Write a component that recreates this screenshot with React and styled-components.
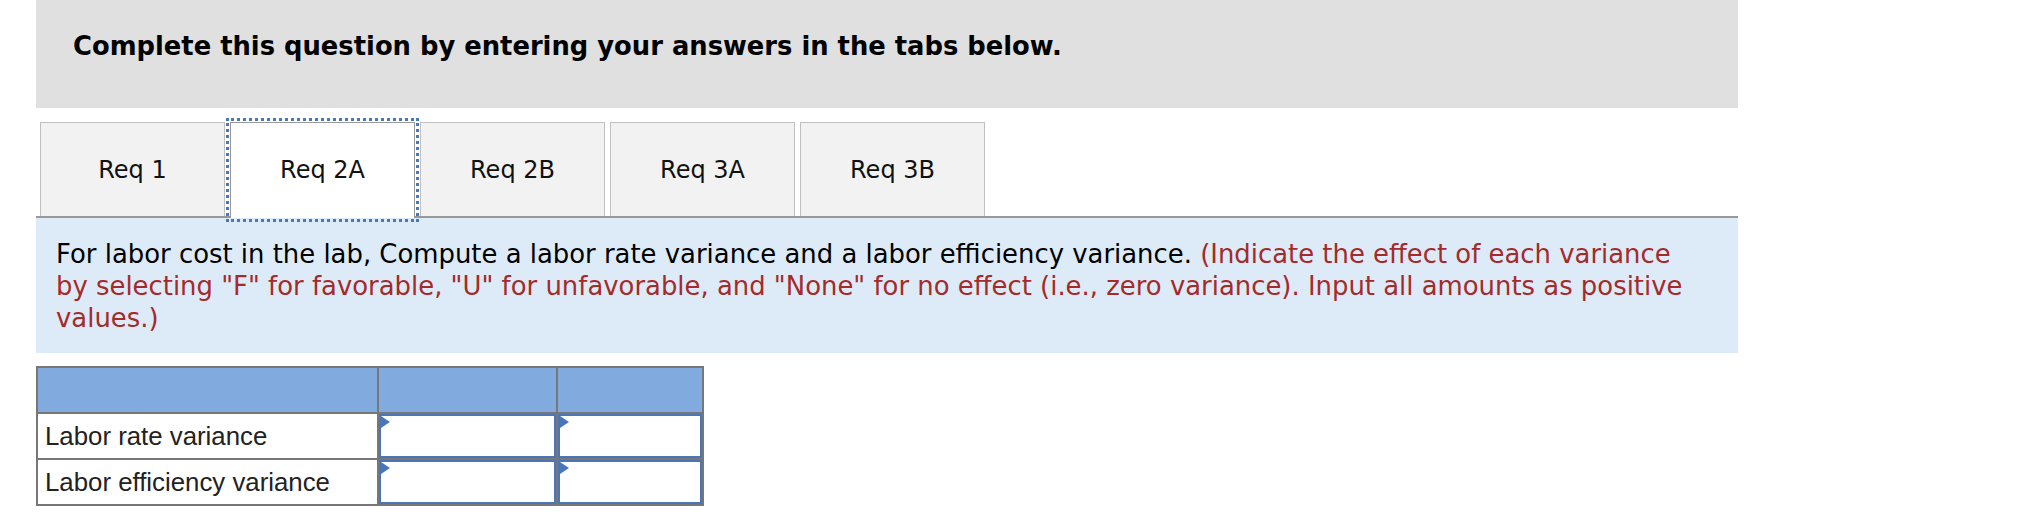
import React from "react"
import styled, { createGlobalStyle } from "styled-components"

const GlobalStyle = createGlobalStyle`
  html, body {
    margin: 0;
    padding: 0;
    background: #ffffff;
  }
  body {
    font-family: "DejaVu Sans", Verdana, sans-serif;
  }
`

const Page = styled.div`
  width: 1702px;
  margin-left: 36px;
`

const Banner = styled.div`
  background-color: #e0e0e0;
  height: 108px;
  box-sizing: border-box;
  padding: 30px 0 0 37px;
`

const BannerTitle = styled.h2`
  margin: 0;
  font-size: 25.8px;
  font-weight: bold;
  color: #000;
  line-height: 32px;
`

const TabBar = styled.div`
  display: flex;
  gap: 5px;
  margin-top: 14px;
  padding-left: 4px;
  border-bottom: 2px solid #999999;
  height: 94px;
`

const Tab = styled.div`
  width: 185px;
  height: ${(p) => (p.active ? "96px" : "94px")};
  box-sizing: border-box;
  display: flex;
  align-items: center;
  justify-content: center;
  padding-bottom: ${(p) => (p.active ? "2px" : "0")};
  font-size: 24px;
  color: #111;
  background-color: ${(p) => (p.active ? "#ffffff" : "#f2f2f2")};
  border: 1px solid ${(p) => (p.active ? "#999999" : "#c0c0c0")};
  border-bottom: 0;
  outline: ${(p) => (p.active ? "3px dotted #4a78bd" : "none")};
  outline-offset: 1px;
  position: relative;
  z-index: ${(p) => (p.active ? 1 : 0)};
`

const Prompt = styled.div`
  background-color: #ddebf8;
  padding: 20px 28px 19px 20px;
  font-size: 25.9px;
  line-height: 32px;
  color: #000;
`

const Note = styled.span`
  color: #a52a2a;
`

const AnswerTable = styled.table`
  margin-top: 13px;
  width: 660px;
  table-layout: fixed;
  border-collapse: collapse;
  border: 2px solid #777777;
  font-family: "Liberation Sans", Arial, sans-serif;
  font-size: 25.8px;
  color: #222;
`

const HeadCell = styled.th`
  background-color: #81aadf;
  border: 2px solid #777777;
  height: 44px;
  width: ${(p) => p.w}px;
  padding: 0;
`

const LabelCell = styled.td`
  border: 2px solid #777777;
  height: 44px;
  padding: 0 0 0 7px;
  text-align: left;
  white-space: nowrap;
  overflow: hidden;
`

const InputCell = styled.td`
  border: 2px solid #777777;
  height: 44px;
  padding: 0;
`

const InputBox = styled.div`
  position: relative;
  box-sizing: border-box;
  width: 100%;
  height: 44px;
  border: 2px solid #4a76b8;
  background: #fff;
`

const Flag = styled.span`
  position: absolute;
  left: 0;
  top: 0;
  width: 0;
  height: 0;
  border-left: 9px solid #4a76b8;
  border-top: 6px solid transparent;
  border-bottom: 6px solid transparent;
`

const tabs = ["Req 1", "Req 2A", "Req 2B", "Req 3A", "Req 3B"]
const rows = ["Labor rate variance", "Labor efficiency variance"]

export default function App() {
  return (
    <>
      <GlobalStyle />
      <Page>
        <Banner>
          <BannerTitle>Complete this question by entering your answers in the tabs below.</BannerTitle>
        </Banner>
        <TabBar>
          {tabs.map((t) => (
            <Tab key={t} active={t === "Req 2A"}>
              {t}
            </Tab>
          ))}
        </TabBar>
        <Prompt>
          For labor cost in the lab, Compute a labor rate variance and a labor efficiency variance.{" "}
          <Note>
            (Indicate the effect of each variance by selecting "F" for favorable, "U" for unfavorable,
            and "None" for no effect (i.e., zero variance). Input all amounts as positive values.)
          </Note>
        </Prompt>
        <AnswerTable>
          <thead>
            <tr>
              <HeadCell w={339} />
              <HeadCell w={177} />
              <HeadCell w={144} />
            </tr>
          </thead>
          <tbody>
            {rows.map((r) => (
              <tr key={r}>
                <LabelCell>{r}</LabelCell>
                <InputCell>
                  <InputBox>
                    <Flag />
                  </InputBox>
                </InputCell>
                <InputCell>
                  <InputBox>
                    <Flag />
                  </InputBox>
                </InputCell>
              </tr>
            ))}
          </tbody>
        </AnswerTable>
      </Page>
    </>
  )
}
